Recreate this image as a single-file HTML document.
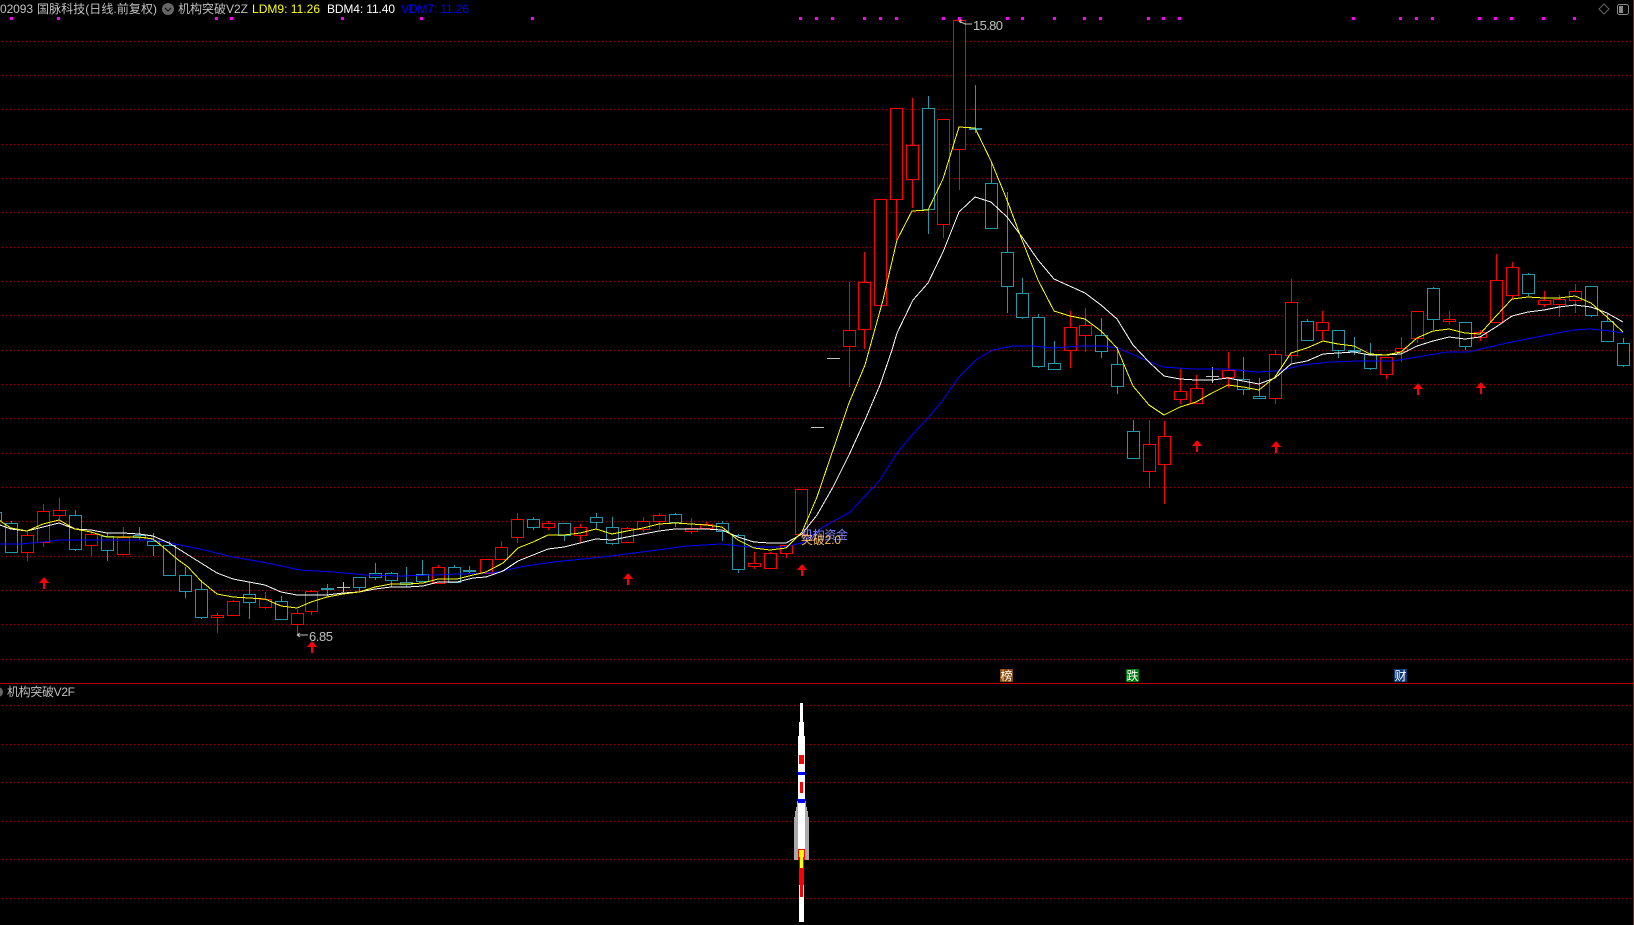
<!DOCTYPE html>
<html><head><meta charset="utf-8"><title>国脉科技</title>
<style>
html,body{margin:0;padding:0;background:#000;width:1634px;height:925px;overflow:hidden}
svg{display:block}
text{font-family:"Liberation Sans","WenQuanYi Zen Hei","Noto Sans CJK SC",sans-serif;font-size:12px}
</style></head><body>
<svg width="1634" height="925" viewBox="0 0 1634 925" xmlns="http://www.w3.org/2000/svg">
<rect width="1634" height="925" fill="#000"/>
<g shape-rendering="crispEdges">
<path fill="none" stroke="#a80000" stroke-width="1" stroke-dasharray="1 3" d="M2 41.5H1632M2 75.5H1632M2 109.5H1632M2 144.5H1632M2 178.5H1632M2 212.5H1632M2 247.5H1632M2 281.5H1632M2 315.5H1632M2 350.5H1632M2 384.5H1632M2 418.5H1632M2 453.5H1632M2 487.5H1632M2 521.5H1632M2 556.5H1632M2 590.5H1632M2 624.5H1632M2 659.5H1632M2 705.5H1632M2 744.5H1632M2 782.5H1632M2 821.5H1632M2 859.5H1632M2 898.5H1632"/>
<rect x="0" y="683" width="1634" height="1" fill="#b80000"/>
<rect x="1633" y="0" width="1" height="925" fill="#c00000"/>
<path fill="#ff00ff" d="M10 17h3v3h-3zM57 17h3v3h-3zM215 17h3v3h-3zM230 17h3v3h-3zM341 17h3v3h-3zM420 17h3v3h-3zM531 17h3v3h-3zM799 17h3v3h-3zM815 17h3v3h-3zM831 17h3v3h-3zM863 17h3v3h-3zM879 17h3v3h-3zM895 17h3v3h-3zM942 17h3v3h-3zM958 17h3v3h-3zM1006 17h3v3h-3zM1021 17h3v3h-3zM1053 17h3v3h-3zM1083 17h3v3h-3zM1099 17h3v3h-3zM1147 17h3v3h-3zM1162 17h3v3h-3zM1178 17h3v3h-3zM1352 17h3v3h-3zM1399 17h3v3h-3zM1415 17h3v3h-3zM1431 17h3v3h-3zM1478 17h3v3h-3zM1494 17h3v3h-3zM1510 17h3v3h-3zM1542 17h3v3h-3zM1573 17h3v3h-3z"/>
<!-- teal candles -->
<path fill="#000" stroke="#2796a8" stroke-width="1" d="M-10.5 512.5h12v8h-12z
M5.5 523.5h12v29h-12zM11.5 521V523
M69.5 515.5h12v34h-12zM75.5 510V515M75.5 550V551
M101.5 536.5h12v14h-12zM107.5 533V536M107.5 551V561
M133.5 535.5h12v2h-12zM139.5 527V535M139.5 538V540
M147.5 541.5h12v4h-12zM153.5 533V541M153.5 546V556
M163.5 545.5h12v30h-12zM169.5 541V545
M179.5 575.5h12v16h-12zM185.5 567V575M185.5 592V598
M195.5 589.5h12v28h-12zM201.5 580V589M201.5 618V619
M243.5 594.5h12v8h-12zM249.5 582V594M249.5 603V619
M275.5 601.5h12v18h-12zM281.5 596V601
M353.5 577.5h12v10h-12zM359.5 588V591
M369.5 573.5h12v4h-12zM375.5 563V573M375.5 578V580
M385.5 573.5h12v7h-12zM391.5 572V573M391.5 581V587
M400.5 582.5h12v2h-12zM406.5 567V582M406.5 585V587
M416.5 574.5h12v7h-12zM422.5 560V574
M448.5 567.5h12v15h-12zM454.5 565V567
M527.5 519.5h12v8h-12zM533.5 517V519M533.5 528V530
M558.5 523.5h12v12h-12zM564.5 536V541
M590.5 517.5h12v5h-12zM596.5 513V517M596.5 523V528
M606.5 527.5h12v16h-12zM612.5 517V527M612.5 544V545
M669.5 514.5h12v8h-12zM675.5 513V514M675.5 523V527
M716.5 523.5h12v8h-12zM722.5 521V523M722.5 532V541
M732.5 535.5h12v34h-12zM738.5 534V535M738.5 570V573
M922.5 108.5h12v101h-12zM928.5 96V108M928.5 210V234
M985.5 183.5h12v45h-12zM991.5 163V183
M1001.5 252.5h12v34h-12zM1007.5 192V252M1007.5 287V313
M1016.5 293.5h12v24h-12zM1022.5 278V293M1022.5 318V319
M1032.5 317.5h12v49h-12zM1038.5 314V317M1038.5 367V368
M1048.5 363.5h12v6h-12zM1054.5 341V363
M1095.5 335.5h12v16h-12zM1101.5 318V335M1101.5 352V358
M1111.5 364.5h12v22h-12zM1117.5 347V364M1117.5 387V394
M1127.5 431.5h12v27h-12zM1133.5 420V431
M1237.5 379.5h12v10h-12zM1243.5 357V379M1243.5 390V395
M1253.5 396.5h12v2h-12zM1259.5 378V396
M1301.5 321.5h12v19h-12zM1307.5 319V321
M1332.5 330.5h12v20h-12zM1338.5 351V358
M1364.5 354.5h12v14h-12zM1370.5 343V354M1370.5 369V370
M1427.5 288.5h12v31h-12zM1433.5 287V288M1433.5 320V330
M1459.5 322.5h12v24h-12zM1465.5 347V350
M1522.5 274.5h12v19h-12zM1528.5 273V274M1528.5 294V296
M1585.5 286.5h12v29h-12zM1591.5 316V317
M1601.5 321.5h12v20h-12zM1607.5 313V321
M1617.5 343.5h12v22h-12zM1623.5 338V343M1623.5 366V367"/>
<!-- teal flat / crosses -->
<path fill="#2796a8" d="M321 588h13v2h-13zM327 584h1v12h-1zM463 570h13v2h-13zM469 566h1v8h-1zM969 128h13v2h-13zM975 85h1v48h-1zM1348 350h13v2h-13zM1354 337h1v18h-1z"/>
<!-- red candles -->
<path fill="#000" stroke="#ff0000" stroke-width="1" d="M21.5 535.5h12v17h-12zM27.5 532V535M27.5 553V561
M37.5 511.5h12v31h-12zM43.5 504V511M43.5 543V547
M53.5 510.5h12v5h-12zM59.5 498V510M59.5 516V520
M85.5 534.5h12v11h-12zM91.5 532V534M91.5 546V556
M117.5 537.5h12v17h-12zM123.5 527V537
M211.5 615.5h12v2h-12zM217.5 613V615M217.5 618V633
M227.5 601.5h12v14h-12zM233.5 600V601M233.5 616V616
M259.5 599.5h12v8h-12zM265.5 592V599M265.5 608V609
M291.5 613.5h12v11h-12zM297.5 609V613M297.5 625V635
M305.5 591.5h12v20h-12zM311.5 590V591M311.5 612V615
M432.5 567.5h12v16h-12zM438.5 565V567
M480.5 559.5h12v14h-12z
M495.5 547.5h12v12h-12zM501.5 541V547
M511.5 519.5h12v18h-12zM517.5 513V519M517.5 538V543
M542.5 523.5h12v4h-12zM548.5 521V523M548.5 528V530
M574.5 527.5h12v8h-12zM580.5 524V527M580.5 536V543
M621.5 528.5h12v14h-12zM627.5 527V528M627.5 543V543
M637.5 521.5h12v8h-12zM643.5 517V521M643.5 530V532
M653.5 515.5h12v6h-12zM659.5 513V515M659.5 522V529
M685.5 528.5h12v3h-12zM691.5 518V528M691.5 532V534
M700.5 524.5h12v4h-12zM706.5 522V524M706.5 529V529
M748.5 563.5h12v3h-12zM754.5 552V563M754.5 567V569
M764.5 553.5h12v15h-12zM770.5 552V553M770.5 569V569
M780.5 545.5h12v8h-12zM786.5 554V558
M795.5 489.5h12v45h-12z
M843.5 330.5h12v16h-12zM849.5 282V330M849.5 347V387
M858.5 282.5h12v47h-12zM864.5 252V282M864.5 330V349
M874.5 199.5h12v106h-12z
M890.5 108.5h12v91h-12zM896.5 200V240
M906.5 145.5h12v34h-12zM912.5 98V145M912.5 180V208
M937.5 119.5h12v105h-12zM943.5 225V238
M953.5 20.5h12v129h-12zM959.5 150V190
M1064.5 327.5h12v23h-12zM1070.5 311V327M1070.5 351V368
M1079.5 325.5h12v10h-12zM1085.5 308V325M1085.5 336V352
M1143.5 444.5h12v27h-12zM1149.5 420V444M1149.5 472V488
M1158.5 436.5h12v28h-12zM1164.5 421V436M1164.5 465V504
M1174.5 391.5h12v8h-12zM1180.5 369V391M1180.5 400V404
M1190.5 388.5h12v15h-12zM1196.5 375V388
M1222.5 370.5h12v7h-12zM1228.5 352V370M1228.5 378V388
M1269.5 354.5h12v44h-12zM1275.5 350V354M1275.5 399V404
M1285.5 302.5h12v53h-12zM1291.5 279V302M1291.5 356V363
M1316.5 322.5h12v8h-12zM1322.5 311V322M1322.5 331V340
M1380.5 357.5h12v17h-12zM1386.5 375V379
M1395.5 348.5h12v3h-12zM1401.5 337V348M1401.5 352V362
M1411.5 311.5h12v27h-12zM1417.5 339V343
M1443.5 319.5h12v2h-12zM1449.5 311V319M1449.5 322V324
M1474.5 332.5h12v5h-12zM1480.5 330V332M1480.5 338V341
M1490.5 280.5h12v42h-12zM1496.5 254V280
M1506.5 267.5h12v28h-12zM1512.5 262V267M1512.5 296V299
M1538.5 300.5h12v4h-12zM1544.5 291V300M1544.5 305V307
M1553.5 299.5h12v5h-12zM1559.5 295V299M1559.5 305V317
M1569.5 291.5h12v9h-12zM1575.5 284V291M1575.5 301V313"/>
<!-- grey crosses / dashes -->
<path fill="#c0c0c0" d="M337 587h13v1h-13zM343 582h1v10h-1zM811 427h13v1h-13zM827 358h13v1h-13zM1206 376h13v1h-13zM1212 367h1v16h-1z"/>
<!-- moving averages -->
<polyline fill="none" stroke="#0000ff" stroke-width="1" points="0,544 20,544 43,542 59,540 100,540 153,540 170,543 200,549 233,557 267,563 300,570 333,572 367,575 400,576 433,575 460,574 493,573 520,567 553,562 603,557 650,551 687,546 720,544 750,547 783,547 802,543 823,527 850,512 880,480 897,453 912,435 928,418 943,400 958,378 977,359 993,350 1013,346 1033,346 1053,348 1080,346 1103,346 1118,348 1143,359 1163,367 1193,369 1227,369 1257,372 1277,371 1303,365 1330,362 1360,361 1393,361 1447,352 1468,352 1507,343 1547,335 1573,330 1590,329 1610,331 1623,333"/>
<polyline fill="none" stroke="#ffffff" stroke-width="1" points="0,525 11,529 27,531 43,527 59,523 75,529 91,530 107,533 123,533 139,534 153,536 169,543 185,553 201,563 217,573 233,579 249,582 265,585 281,592 297,595 311,595 327,595 343,593 359,592 375,589 391,587 407,587 423,586 438,582 457,582 473,578 486,577 503,571 518,561 533,555 548,549 564,547 580,543 596,539 612,540 627,537 643,534 659,531 675,529 691,529 706,529 722,530 738,537 754,542 770,543 786,543 802,534 817,515 833,487 849,455 865,420 880,385 892,350 897,333 913,300 928,283 943,252 959,212 975,197 991,202 1007,217 1022,237 1038,260 1054,279 1085,293 1101,305 1117,319 1133,345 1149,362 1164,376 1180,379 1196,380 1212,380 1228,378 1243,381 1259,384 1275,378 1291,364 1307,361 1323,354 1338,353 1354,352 1370,355 1386,355 1401,354 1417,346 1433,341 1449,337 1465,339 1480,337 1496,327 1512,316 1528,312 1544,310 1559,307 1575,305 1591,307 1607,313 1623,322"/>
<polyline fill="none" stroke="#ffff00" stroke-width="1" points="0,521 11,528 27,531 43,524 59,520 75,529 91,532 107,537 123,537 139,537 153,539 163,547 177,559 188,567 201,581 217,594 233,597 249,598 265,599 281,606 297,608 311,602 327,597 343,594 359,592 375,587 391,584 407,584 423,583 438,579 457,579 473,575 486,572 503,563 518,548 533,542 548,535 564,535 580,533 596,529 612,534 627,531 643,528 659,524 675,523 691,524 706,525 722,527 738,540 754,548 770,550 786,548 802,532 817,497 833,450 849,403 865,365 883,300 897,240 912,211 928,210 943,179 959,127 975,128 991,161 1007,200 1022,240 1038,280 1054,311 1070,316 1085,319 1101,331 1117,348 1133,386 1149,405 1164,415 1180,407 1196,402 1212,393 1228,385 1243,387 1259,390 1275,377 1291,353 1307,348 1323,341 1338,344 1354,346 1370,354 1386,355 1401,352 1417,338 1433,331 1449,329 1465,333 1480,334 1496,316 1512,299 1528,297 1544,298 1559,298 1575,296 1591,303 1607,317 1623,332"/>
<!-- red arrows -->
<path fill="#ff0000" d="M44 577l5 6h-4v6h-2v-6h-4zM312 641l5 6h-4v6h-2v-6h-4zM628 573l5 6h-4v6h-2v-6h-4zM802 564l5 6h-4v6h-2v-6h-4zM1197 440l5 6h-4v6h-2v-6h-4zM1276 441l5 6h-4v6h-2v-6h-4zM1418 383l5 6h-4v6h-2v-6h-4zM1481 382l5 6h-4v6h-2v-6h-4z"/>
<!-- rocket -->
<rect x="800" y="703" width="3" height="19" fill="#fff"/>
<rect x="799" y="722" width="5" height="14" fill="#fff"/>
<path fill="#aaaaaa" d="M797 801h9v6h1v4h1v6h1v43h-15v-43h1v-6h1v-4h1z"/>
<rect x="798" y="736" width="7" height="124" fill="#fff"/>
<rect x="799" y="755" width="5" height="9" fill="#f00"/>
<rect x="798" y="772" width="7" height="3" fill="#0000ff"/>
<rect x="800" y="782" width="3" height="11" fill="#f00"/>
<rect x="798" y="799" width="7" height="4" fill="#0000ff"/>
<rect x="799" y="885" width="5" height="37" fill="#fff"/>
<rect x="798" y="849" width="7" height="11" fill="#f00"/>
<rect x="799" y="857" width="5" height="28" fill="#f00"/>
<rect x="799" y="850" width="5" height="7" fill="#ff0"/>
<rect x="800" y="857" width="3" height="11" fill="#ff0"/>
<rect x="800" y="885" width="3" height="12" fill="#f00"/>
<!-- badges -->
<rect x="1000" y="669" width="13" height="13" fill="#8a4a08"/>
<rect x="1126" y="669" width="13" height="13" fill="#007a10"/>
<rect x="1394" y="669" width="13" height="13" fill="#0c3a78"/>
</g>
<!-- header -->
<text x="0" y="13" fill="#c0c0c0" textLength="33">02093</text>
<text x="37" y="13" fill="#c0c0c0" textLength="120">国脉科技(日线.前复权)</text>
<circle cx="168" cy="9" r="6" fill="#666"/>
<path d="M165 8l3 3 3-3" fill="none" stroke="#111" stroke-width="1.2"/>
<text x="178" y="13" fill="#c0c0c0" textLength="70">机构突破V2Z</text>
<text x="252" y="13" fill="#ffff00" textLength="68">LDM9: 11.26</text>
<text x="327" y="13" fill="#ffffff" textLength="68">BDM4: 11.40</text>
<text x="401" y="13" fill="#0000ff" textLength="68">VDM7: 11.26</text>
<!-- top right icons -->
<path d="M1604 4l5 5-5 5-5-5z" fill="none" stroke="#666" stroke-width="1"/>
<rect x="1617.5" y="4.5" width="11" height="10" rx="2" fill="none" stroke="#888" stroke-width="1"/>
<rect x="1619" y="6" width="4" height="7" fill="#888"/>
<!-- price labels -->
<path d="M959 21l6 3h7M959 21l3-1M959 21l2 2" fill="none" stroke="#c0c0c0" stroke-width="1"/>
<text x="973" y="30" fill="#c0c0c0" style="font-size:13px" textLength="30">15.80</text>
<path d="M297 635h11M297 635l3-2M297 635l3 2" fill="none" stroke="#c0c0c0" stroke-width="1"/>
<text x="309" y="641" fill="#c0c0c0" style="font-size:13px" textLength="24">6.85</text>
<text x="801" y="539" fill="#8080ff" textLength="47">机构资金</text>
<text x="801" y="544" fill="#ffc060" textLength="40">突破2.0</text>
<!-- lower panel label -->
<circle cx="-2" cy="692" r="5" fill="#666"/>
<text x="7" y="696" fill="#c0c0c0" textLength="68">机构突破V2F</text>
<text x="1000.5" y="680" fill="#fff" textLength="12">榜</text>
<text x="1126.5" y="680" fill="#fff" textLength="12">跌</text>
<text x="1394.5" y="680" fill="#fff" textLength="12">财</text>
</svg>
</body></html>
